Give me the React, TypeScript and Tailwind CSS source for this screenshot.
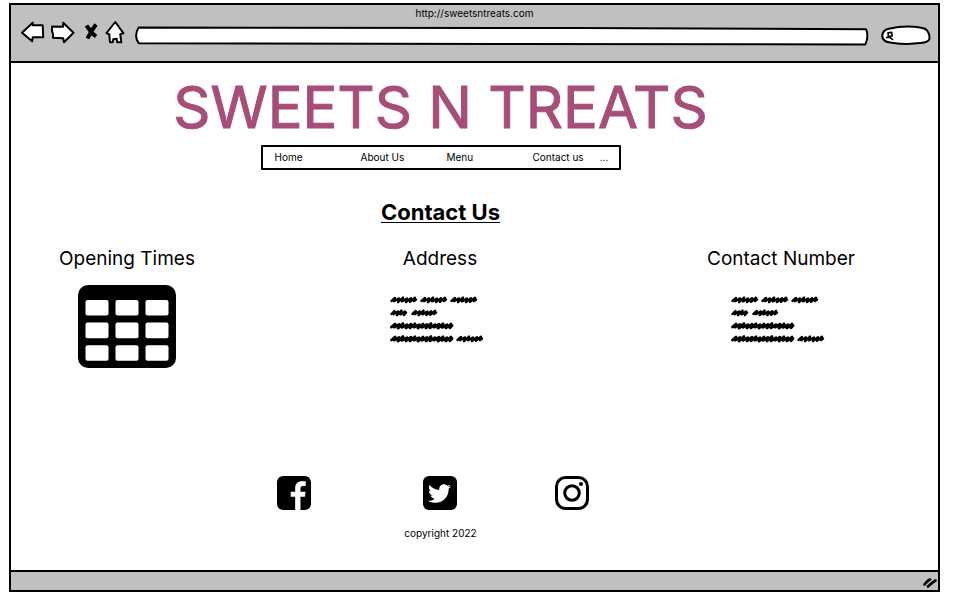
import type { ReactNode } from "react";
import { FaTwitter } from "react-icons/fa";

const links = ["Home", "About Us", "Menu"];

function ToolButton({ label, className, children }: { label: string; className: string; children: ReactNode }) {
  return (
    <button type="button" aria-label={label} className={`shrink-0 ${className}`}>
      {children}
    </button>
  );
}

function Outline({ d }: { d: string }) {
  return (
    <svg
      viewBox="0 0 100 20"
      preserveAspectRatio="none"
      className="absolute inset-0 h-full w-full overflow-visible"
      aria-hidden="true"
    >
      <path d={d} fill="white" stroke="black" strokeWidth="2" strokeLinejoin="round" vectorEffect="non-scaling-stroke" />
    </svg>
  );
}

function Toolbar() {
  const shape = { fill: "white", stroke: "black", strokeWidth: 2, strokeLinejoin: "round" as const };
  return (
    <div className="flex h-6 items-center pr-2 pl-[9px]">
      <ToolButton label="Back" className="mr-[5px]">
        <svg width="25" height="24" viewBox="0 0 25 24">
          <path {...shape} d="M2 11.7 12.7 1.7 12.7 4.2 22.7 4.2 23.2 16.3 12.7 16.3 12.2 20.3Z" />
        </svg>
      </ToolButton>
      <ToolButton label="Forward" className="mr-[9px]">
        <svg width="25" height="24" viewBox="0 0 25 24">
          <path {...shape} d="M2 5.5 13 5.7 13.2 1.7 23.5 11.7 14 21.3 13.2 17.2 3 16.7 3 13 2 10Z" />
        </svg>
      </ToolButton>
      <ToolButton label="Stop" className="mr-[7px]">
        <svg width="14" height="24" viewBox="0 0 14 24">
          <path
            d="M2.5 4.5C5 8.5 8 12.5 12 15.5M12 3.5C8.5 8 6 12 3.5 17.5"
            fill="none"
            stroke="black"
            strokeWidth="4"
            strokeLinejoin="round"
          />
        </svg>
      </ToolButton>
      <ToolButton label="Home page" className="mr-[10px]">
        <svg width="20" height="24" viewBox="0 0 20 24">
          <path {...shape} d="M10.3 1 18.5 12.3 15.3 13.3 16.3 21.3 12.3 21.3 11.7 17.7 8.3 18.3 7.7 21.3 5 21.3 4.3 13.3 1.5 12Z" />
        </svg>
      </ToolButton>
      <div className="relative mt-1.5 h-4 min-w-0 flex-1">
        <Outline d="M0.5 -0.5 L60 0 L99.6 1.5 Q100 11 99.5 20.5 L50 20 L0.5 19 Q-0.2 10 0.5 -0.5Z" />
        <input aria-label="Page address" className="relative block h-full w-full bg-transparent px-2 text-[10px] outline-none" />
      </div>
      <label className="relative mt-1 ml-[13px] block h-[18px] w-12 shrink-0">
        <Outline d="M14 3 Q50 -1.5 82 2 Q99 3 99 14 Q98 18 80 19 Q50 21 20 18.5 Q1 18 0.5 11 Q1 4.5 14 3Z" />
        <svg width="10" height="10" viewBox="0 0 10 10" className="absolute top-[5px] left-[3px]" aria-hidden="true">
          <path d="M3 1.8 6.6 1.4 7.2 5 3.4 5.6Z" fill="none" stroke="black" strokeWidth="1.6" strokeLinejoin="round" />
          <path d="M1 6.4H5L8 8.8" fill="none" stroke="black" strokeWidth="1.5" />
        </svg>
        <input aria-label="Search" className="relative block h-full w-full bg-transparent pr-2 pl-4 text-[10px] outline-none" />
      </label>
    </div>
  );
}

const peaks = [1.2, 2, 1.6, 2.4, 1.4, 1.8, 2.2];
const dips = [1.8, 1.2, 2.2, 1.4, 2];

function scribble(x: number, y: number, width: number) {
  let d = `M${x + 1.5} ${y + 1}`;
  const steps = Math.round(width / 4.2);
  for (let i = 1; i <= steps; i++) {
    const px = x + 1 + (i * (width - 3)) / steps;
    d += `L${px.toFixed(1)} ${y - peaks[i % 7]}L${(px - 1).toFixed(1)} ${y + dips[i % 5]}`;
  }
  return d + `L${x + width - 1} ${y - 0.5}`;
}

const words = [
  [0, 7, 27], [30, 7, 27], [60, 7, 27],
  [0, 20, 17], [21, 20, 26],
  [0, 33, 63],
  [0, 46, 63], [66, 46, 27],
];

function ScribbleText({ label }: { label: string }) {
  return (
    <svg width="94" height="52" viewBox="0 0 94 52" role="img" aria-label={label} className="mt-5 mr-1.5">
      {words.map(([x, y, w]) => (
        <path
          key={`${x}-${y}`}
          d={scribble(x, y, w)}
          fill="none"
          stroke="black"
          strokeWidth={w > 50 ? 2.8 : 2.4}
          strokeLinejoin="round"
          strokeLinecap="round"
        />
      ))}
    </svg>
  );
}

function TableIcon() {
  return (
    <svg width="98" height="83" viewBox="0 0 98 83" role="img" aria-label="Opening times table" className="mt-3">
      <rect width="98" height="83" rx="10" />
      {[15, 37.6, 60.2].map((y) =>
        [7.5, 37.5, 67.5].map((x) => <rect key={`${x}-${y}`} x={x} y={y} width="23" height="15.6" rx="2" fill="white" />)
      )}
    </svg>
  );
}

function Column({ title, children }: { title: string; children: ReactNode }) {
  return (
    <section className="flex flex-col items-center">
      <h3 className="text-[19px] leading-7 whitespace-nowrap">{title}</h3>
      {children}
    </section>
  );
}

export default function App() {
  return (
    <div className="flex min-h-screen flex-col bg-white pt-[3px] pr-[15px] pb-3 pl-[9px] font-['Inter',sans-serif] text-black">
      <div className="flex flex-1 flex-col border-2 border-black">
        <header className="border-b-2 border-black bg-[#c0c0c0] pb-4">
          <p className="text-center text-[10px] leading-4">http://sweetsntreats.com</p>
          <Toolbar />
        </header>

        <main className="flex flex-1 flex-col pt-[14px] pb-[29px]">
          <div className="flex flex-col items-center pr-[68px]">
            <h1 className="text-[58px] leading-[60px] whitespace-nowrap text-[#a64d79] [-webkit-text-stroke:1px_#a64d79]">
              SWEETS N TREATS
            </h1>
            <nav className="mt-2 flex h-[25px] w-[360px] items-center rounded-[1px] border-2 border-black pl-3 text-[10px]">
              {links.map((link) => (
                <a key={link} href="#" className="w-[86px]">
                  {link}
                </a>
              ))}
              <a href="#">Contact us</a>
              <a href="#" className="ml-4">...</a>
            </nav>
            <h2 className="mt-7 text-[22px] leading-7 font-bold underline decoration-1 underline-offset-2">Contact Us</h2>
          </div>

          <div className="mt-[19px] mr-[13px] grid grid-cols-[232fr_394fr_288fr]">
            <Column title="Opening Times">
              <TableIcon />
            </Column>
            <Column title="Address">
              <ScribbleText label="Address lines" />
            </Column>
            <Column title="Contact Number">
              <ScribbleText label="Contact number lines" />
            </Column>
          </div>

          <footer className="mt-auto flex flex-col items-center pr-[68px]">
            <div className="flex pr-4">
              <a href="#" aria-label="Facebook">
                <svg width="34" height="34" viewBox="0 0 24 24">
                  <path d="M19.5 0H4.5C2 0 0 2 0 4.5v15C0 22 2 24 4.5 24h8.32v-9.294H9.692v-3.622h3.128V8.413c0-3.1 1.893-4.788 4.659-4.788 1.325 0 2.463.099 2.795.143v3.24h-1.918c-1.504 0-1.795.715-1.795 1.763v2.313h3.587l-.467 3.622h-3.12V24H19.5C22 24 24 22 24 19.5v-15C24 2 22 0 19.5 0z" />
                </svg>
              </a>
              <a
                href="#"
                aria-label="Twitter"
                className="ml-28 flex size-[34px] items-center justify-center rounded-md bg-black"
              >
                <FaTwitter size={23} color="white" />
              </a>
              <a href="#" aria-label="Instagram" className="ml-[98px]">
                <svg width="34" height="34" viewBox="0 0 34 34" fill="none" stroke="black" strokeWidth="3">
                  <rect x="1.5" y="1.5" width="31" height="31" rx="9" />
                  <circle cx="17" cy="17" r="7.3" />
                  <circle cx="26" cy="8" r="2" fill="black" stroke="none" />
                </svg>
              </a>
            </div>
            <p className="mt-[15px] text-[10px] leading-4">copyright 2022</p>
          </footer>
        </main>

        <div className="flex h-5 items-end justify-end border-t-2 border-black bg-[#c0c0c0]">
          <svg width="15" height="14" viewBox="0 0 15 14" aria-hidden="true">
            <path d="M1.5 8.5C3 7 4 5 7 3.5M5 10.5C7 8.5 9 6.5 12.5 4.5" fill="none" stroke="black" strokeWidth="2.6" strokeLinecap="round" />
          </svg>
        </div>
      </div>
    </div>
  );
}
